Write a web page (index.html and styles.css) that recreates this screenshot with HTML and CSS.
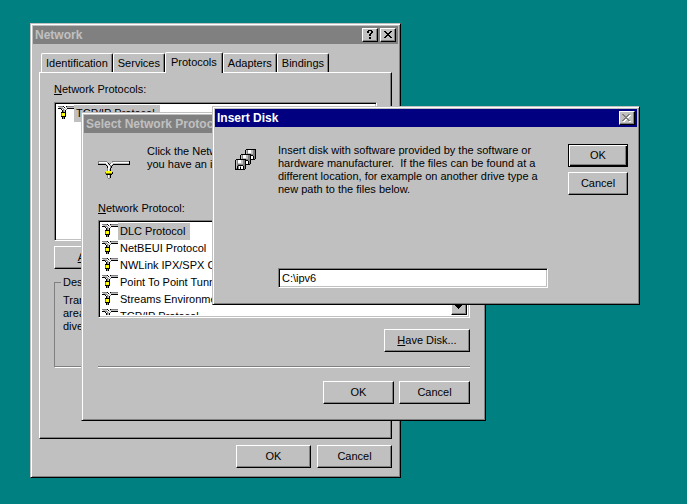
FILE: index.html
```
<!DOCTYPE html>
<html lang="en">
<head>
<meta charset="utf-8">
<title>Network</title>
<link rel="stylesheet" href="styles.css">
</head>
<body>
<svg class="defs" width="0" height="0" aria-hidden="true">
  <symbol id="net-small" viewBox="0 0 16 14">
    <g shape-rendering="crispEdges">
      <path fill="#808080" d="M0 0h5v1H0zM9 0h7v1H9zM3 2h2v1H3zM8 3h1v1H8zM5 3h1v3H5z"/>
      <path fill="#c0c0c0" d="M1 1h4v1H1zM8 1h8v1H8zM5 2h1v1H5zM7 2h1v1H7zM6 3h1v3H6z"/>
      <path fill="#000" d="M0 2h3v1H0zM9 2h7v1H9zM5 0h1v1H5zM8 0h1v1H8zM6 1h1v1H6zM3 3h1v1H3zM7 4h1v2H7zM4 4h1v2H4zM3 6h5v1H3zM7 7h1v3H7zM3 10h5v1H3zM4 11h1v2H4zM6 11h1v2H6z"/>
      <path fill="#808000" d="M3 7h1v3H3z"/>
      <path fill="#ff0" d="M4 7h3v3H4z"/>
      <path fill="#fff" d="M5 8h1v1H5z"/>
      <path fill="#808080" d="M5 11h1v2H5z"/>
    </g>
  </symbol>
</svg>
<main class="desktop">
  <section class="window network" aria-label="Network">
    <header class="titlebar">
      <h1>Network</h1>
      <button class="cap" type="button" aria-label="Help"><svg width="8" height="9" viewBox="0 0 8 9" shape-rendering="crispEdges"><path d="M2 0h4v1H2zM1 1h2v2H1zM5 1h2v2H5zM4 3h2v1H4zM3 4h2v2H3zM3 7h2v2H3z"/></svg></button>
      <button class="cap last" type="button" aria-label="Close"><svg width="8" height="7" viewBox="0 0 8 7" shape-rendering="crispEdges"><path d="M0 0h2v1H0zM6 0h2v1H6zM1 1h2v1H1zM5 1h2v1H5zM2 2h4v1H2zM3 3h2v1H3zM2 4h4v1H2zM1 5h2v1H1zM5 5h2v1H5zM0 6h2v1H0zM6 6h2v1H6z"/></svg></button>
    </header>
    <div class="net-body">
      <nav class="tabs" role="tablist">
        <button class="tab" type="button" role="tab">Identification</button>
        <button class="tab" type="button" role="tab">Services</button>
        <button class="tab selected" type="button" role="tab" aria-selected="true">Protocols</button>
        <button class="tab" type="button" role="tab">Adapters</button>
        <button class="tab" type="button" role="tab">Bindings</button>
      </nav>
      <div class="panel" role="tabpanel">
        <p class="label"><u>N</u>etwork Protocols:</p>
        <ul class="list installed">
          <li><svg class="ico"><use href="#net-small"/></svg><span class="sel">TCP/IP Protocol</span></li>
        </ul>
        <div class="actions">
          <button class="btn" type="button"><span><u>A</u>dd...</span></button>
        </div>
        <fieldset class="group">
          <legend>Description:</legend>
          <p>Transport Control Protocol/Internet Protocol. The default wide<br>area network protocol that provides communication across<br>diverse interconnected networks.</p>
        </fieldset>
      </div>
      <footer class="buttons">
        <button class="btn wide" type="button">OK</button>
        <button class="btn wide" type="button">Cancel</button>
      </footer>
    </div>
  </section>

  <section class="window select" aria-label="Select Network Protocol">
    <header class="titlebar"><h2>Select Network Protocol</h2></header>
    <div class="select-body">
      <div class="intro">
        <svg class="big" width="32" height="18" viewBox="0 0 32 18" shape-rendering="crispEdges">
          <path fill="#808080" d="M0 0h9v1H0zM14 0h18v1H14zM0 1h1v2H0z"/>
          <path fill="#fff" d="M1 1h8v1H1zM15 1h16v1H15zM8 2h2v1H8zM9 3h1v1H9zM10 4h1v1h-1zM13 2h2v1h-2zM12 3h2v1h-2zM10 5h2v3h-2z"/>
          <path fill="#c0c0c0" d="M1 2h7v1H1zM16 2h15v1H16z"/>
          <path fill="#000" d="M0 3h8v1H0zM15 3h17v1H15zM31 0h1v3h-1zM10 2h1v1h-1zM11 3h1v1h-1zM8 4h1v1H8zM14 4h1v1h-1zM9 5h1v2H9zM13 5h1v2h-1zM12 7h1v3h-1z"/>
          <path fill="#808080" d="M9 1h1v1H9zM12 2h1v1h-1zM12 4h1v3h-1zM9 7h1v3H9zM9 13h1v4H9zM10 17h2v1h-2z"/>
          <path fill="#000" d="M12 13h1v4h-1zM14 11h1v2h-1zM8 13h6v1H8z"/>
          <path fill="#fff" d="M10 8h1v2h-1zM10 14h1v3h-1z"/>
          <path fill="#808000" d="M7 11h1v2H7zM8 12h6v1H8z"/>
          <path fill="#ff0" d="M8 10h6v2H8z"/>
        </svg>
        <p>Click the Network Protocol that you want to install, then click OK. If<br>you have an installation disk for this component, click Have Disk.</p>
      </div>
      <p class="label"><u>N</u>etwork Protocol:</p>
      <div class="list catalog">
        <ul>
          <li><svg class="ico"><use href="#net-small"/></svg><span class="sel">DLC Protocol</span></li>
          <li><svg class="ico"><use href="#net-small"/></svg><span>NetBEUI Protocol</span></li>
          <li><svg class="ico"><use href="#net-small"/></svg><span>NWLink IPX/SPX Compatible Transport</span></li>
          <li><svg class="ico"><use href="#net-small"/></svg><span>Point To Point Tunneling Protocol</span></li>
          <li><svg class="ico"><use href="#net-small"/></svg><span>Streams Environment</span></li>
          <li><svg class="ico"><use href="#net-small"/></svg><span>TCP/IP Protocol</span></li>
        </ul>
        <div class="scroll">
          <button class="arrow" type="button" aria-label="Scroll down"><svg width="7" height="4" viewBox="0 0 7 4" shape-rendering="crispEdges"><path d="M0 0h7v1H0zM1 1h5v1H1zM2 2h3v1H2zM3 3h1v1H3z"/></svg></button>
        </div>
      </div>
      <div class="disk"><button class="btn have" type="button"><span><u>H</u>ave Disk...</span></button></div>
      <hr>
      <footer class="buttons">
        <button class="btn" type="button">OK</button>
        <button class="btn" type="button">Cancel</button>
      </footer>
    </div>
  </section>

  <section class="window insert" role="dialog" aria-label="Insert Disk">
    <header class="titlebar active">
      <h2>Insert Disk</h2>
      <button class="cap last" type="button" aria-label="Close" disabled><svg width="9" height="8" viewBox="0 0 9 8" shape-rendering="crispEdges"><path fill="#fff" transform="translate(1 1)" d="M0 0h2v1H0zM6 0h2v1H6zM1 1h2v1H1zM5 1h2v1H5zM2 2h4v1H2zM3 3h2v1H3zM2 4h4v1H2zM1 5h2v1H1zM5 5h2v1H5zM0 6h2v1H0zM6 6h2v1H6z"/><path fill="#808080" d="M0 0h2v1H0zM6 0h2v1H6zM1 1h2v1H1zM5 1h2v1H5zM2 2h4v1H2zM3 3h2v1H3zM2 4h4v1H2zM1 5h2v1H1zM5 5h2v1H5zM0 6h2v1H0zM6 6h2v1H6z"/></svg></button>
    </header>
    <form class="insert-body">
      <svg class="disks" width="21" height="21" viewBox="0 0 21 21" shape-rendering="crispEdges">
        <defs>
          <g id="floppy">
            <path fill="#000" d="M1 0h10v10H1zM0 1h1v10H0zM0 10h10v1H0z"/>
            <path fill="#808080" d="M1 1h9v9H1z"/>
            <path fill="#c0c0c0" d="M1 1h1v8H1zM3 1h5v4H3z"/>
            <path fill="#fff" d="M3 1h3v3H3zM4 7h1v3H4zM6 7h2v3H6z"/>
            <path fill="#000" d="M3 6h5v1H3zM2 7h1v3H2zM8 7h1v3H8zM5 8h1v2H5z"/>
          </g>
        </defs>
        <use href="#floppy" x="10" y="0"/>
        <use href="#floppy" x="5" y="5"/>
        <use href="#floppy" x="0" y="10"/>
      </svg>
      <div class="message">
        <label for="path">Insert disk with software provided by the software or<br>hardware manufacturer.&nbsp; If the files can be found at a<br>different location, for example on another drive type a<br>new path to the files below.</label>
        <input id="path" type="text" value="C:\ipv6">
      </div>
      <div class="side">
        <button class="btn default" type="button">OK</button>
        <button class="btn" type="button">Cancel</button>
      </div>
    </form>
  </section>
</main>
</body>
</html>
```
FILE: styles.css
```
* { box-sizing: border-box; }

body {
  margin: 0;
  background: #008080;
  color: #000;
  font: 11px/13px "Liberation Sans", Arial, sans-serif;
}

button, input { font: inherit; color: inherit; border-radius: 0; }
h1, h2, p, ul { margin: 0; padding: 0; }
ul { list-style: none; }
.defs { position: absolute; }

.desktop {
  position: relative;
  min-height: 100vh;
  overflow: hidden;
}

/* Windows */
.window {
  position: absolute;
  background: #c0c0c0;
  border: 1px solid;
  border-color: #c0c0c0 #000 #000 #c0c0c0;
  box-shadow: inset 1px 1px #fff, inset -1px -1px #808080;
  padding: 2px;
}
.network { left: 30px; top: 23px; width: 371px; }
.select { left: 81px; top: 112px; width: 405px; }
.insert { left: 212px; top: 106px; width: 428px; }

.titlebar {
  display: flex;
  align-items: center;
  height: 18px;
  padding: 0 2px;
  background: #808080;
  color: #c0c0c0;
}
.titlebar h1, .titlebar h2 {
  flex: 1;
  font-size: 12px;
  font-weight: bold;
  line-height: 16px;
  white-space: nowrap;
}
.titlebar.active { background: #000080; color: #fff; }

.cap {
  display: flex;
  align-items: center;
  justify-content: center;
  width: 16px;
  height: 14px;
  padding: 0 1px 1px 0;
  background: #c0c0c0;
  border: 1px solid;
  border-color: #fff #000 #000 #fff;
  box-shadow: inset -1px -1px #808080;
}
.cap.last { margin-left: 2px; }

/* Buttons */
.btn {
  width: 71px;
  height: 23px;
  padding: 0;
  background: #c0c0c0;
  border: 1px solid;
  border-color: #fff #000 #000 #fff;
  box-shadow: inset -1px -1px #808080;
  text-align: center;
}
.buttons { display: flex; justify-content: flex-end; }

/* Sunken boxes */
.list, .message input {
  background: #fff;
  border: 1px solid;
  border-color: #808080 #fff #fff #808080;
  box-shadow: inset 1px 1px #000, inset -1px -1px #c0c0c0;
}
.list { padding: 2px; }
.list li {
  display: flex;
  height: 17px;
  padding-left: 1px;
  white-space: nowrap;
}
.ico { flex: none; width: 16px; height: 14px; margin-top: 1px; }
.list li span { padding: 2px 5px 2px 2px; }
.list .sel { background: #c0c0c0; }

/* Network */
.net-body { padding: 8px 6px 7px; }
.tabs {
  display: flex;
  align-items: flex-end;
  height: 21px;
  padding-left: 2px;
  margin-bottom: -1px;
}
.tab {
  height: 19px;
  margin-bottom: 1px;
  padding: 0 4px;
  background: #c0c0c0;
  border: 1px solid;
  border-color: #fff #000 transparent #fff;
  border-bottom: 0;
  border-radius: 2px 2px 0 0;
  box-shadow: inset -1px 0 #808080;
}
.tab.selected {
  position: relative;
  height: 21px;
  margin-bottom: 0;
  padding: 0 5px 2px;
}
.panel {
  height: 367px;
  padding: 10px 14px;
  border: 1px solid;
  border-color: #fff #000 #000 #fff;
  box-shadow: inset -1px -1px #808080;
}
.panel .label { margin-bottom: 6px; }
.installed { height: 139px; }
.actions { display: flex; margin: 5px 0 7px; }
.actions .btn { width: 76px; }
.group {
  position: relative;
  height: 91px;
  margin: 0;
  padding: 5px 8px;
  border: 1px solid #808080;
  box-shadow: 1px 1px #fff;
  white-space: nowrap;
}
.group legend { margin-left: -2px; padding: 0 2px; }
.net-body .buttons { gap: 6px; padding-top: 6px; }
.wide { width: 75px; }

/* Select Network Protocol */
.select-body { padding: 12px 13px 14px 14px; }
.intro {
  display: flex;
  gap: 17px;
  margin-bottom: 23px;
  white-space: nowrap;
}
.big { flex: none; margin-top: 16px; }
.select-body .label { margin-bottom: 5px; }
.catalog { display: flex; height: 98px; overflow: hidden; }
.catalog ul { flex: 1; overflow: hidden; }
.scroll { display: flex; flex-direction: column; justify-content: flex-end; width: 16px; }
.arrow {
  display: flex;
  align-items: center;
  justify-content: center;
  width: 16px;
  height: 16px;
  padding: 0 1px 1px 0;
  background: #c0c0c0;
  border: 1px solid;
  border-color: #fff #000 #000 #fff;
  box-shadow: inset -1px -1px #808080;
}
.disk { display: flex; justify-content: flex-end; margin-top: 11px; }
.have { width: 86px; }
hr {
  margin: 14px 0 13px;
  border: 0;
  border-top: 1px solid #808080;
  border-bottom: 1px solid #fff;
}
.select-body .buttons { gap: 5px; }

/* Insert Disk */
.insert-body { display: flex; padding: 17px 9px 14px 20px; }
.disks { flex: none; margin: 5px 22px 0 0; }
.message { flex: 1; margin-right: 20px; white-space: nowrap; }
.message label { display: block; margin-bottom: 72px; }
.message input { display: block; width: 100%; height: 20px; padding: 0 3px; outline: 0; }
.side { display: flex; flex-direction: column; gap: 5px; }
.side .btn { width: 60px; }
.side .default {
  border-color: #000;
  box-shadow: inset 1px 1px #fff, inset -1px -1px #000, inset -2px -2px #808080;
}
```
